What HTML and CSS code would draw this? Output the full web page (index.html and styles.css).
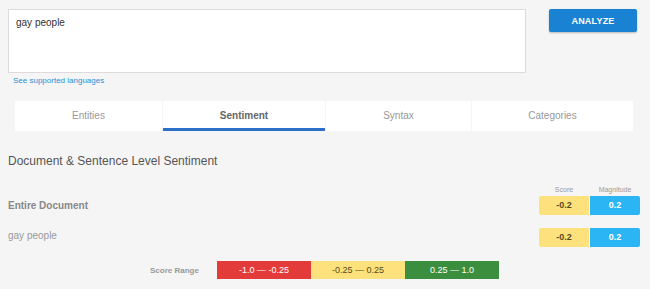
FILE: index.html
```html
<!DOCTYPE html>
<html lang="en">
<head>
  <meta charset="UTF-8">
  <title>Natural Language API</title>
  <link rel="stylesheet" href="styles.css">
</head>
<body>
  <div class="page">
    <div class="input-row">
      <div class="input-col">
        <div class="text-box">gay people</div>
        <a class="lang-link" href="#">See supported languages</a>
      </div>
      <button class="analyze">ANALYZE</button>
    </div>

    <div class="tabs">
      <div class="tab tab-entities">Entities</div>
      <div class="tab tab-sentiment active">Sentiment</div>
      <div class="tab tab-syntax">Syntax</div>
      <div class="tab tab-categories">Categories</div>
    </div>

    <h3 class="section-title">Document &amp; Sentence Level Sentiment</h3>

    <div class="score-head">
      <span>Score</span>
      <span>Magnitude</span>
    </div>

    <div class="result-row">
      <div class="doc-label">Entire Document</div>
      <div class="chips">
        <span class="chip chip-score">-0.2</span>
        <span class="chip chip-mag">0.2</span>
      </div>
    </div>

    <div class="result-row sentence">
      <div class="sent-label">gay people</div>
      <div class="chips">
        <span class="chip chip-score">-0.2</span>
        <span class="chip chip-mag">0.2</span>
      </div>
    </div>

    <div class="range-row">
      <span class="range-label">Score Range</span>
      <span class="range neg">-1.0 — -0.25</span>
      <span class="range neu">-0.25 — 0.25</span>
      <span class="range pos">0.25 — 1.0</span>
    </div>
  </div>
</body>
</html>
```

FILE: styles.css
```css
body {
  margin: 0;
  background: #f5f5f5;
  font-family: "Liberation Sans", Arial, sans-serif;
  color: #333;
}

.page {
  padding: 9px 10px 0 8px;
}

.input-row {
  display: flex;
  align-items: flex-start;
  gap: 23px;
}

.input-col {
  width: 518px;
}

.text-box {
  height: 64px;
  box-sizing: border-box;
  background: white;
  border: 1px solid #dcdcdc;
  padding: 7px 7px;
  font-size: 10px;
  color: #333;
}

.lang-link {
  display: block;
  margin-top: 3px;
  margin-left: 5px;
  font-size: 8px;
  color: #2a8fd6;
  text-decoration: none;
}

.analyze {
  width: 88px;
  height: 23px;
  border: none;
  border-radius: 2px;
  background: #1a82d2;
  color: white;
  font-family: "Liberation Sans", Arial, sans-serif;
  font-weight: bold;
  font-size: 9px;
  letter-spacing: 0.2px;
  box-shadow: 0 1px 2px rgba(0, 0, 0, 0.25);
}

.tabs {
  display: flex;
  gap: 1px;
  margin: 16px 0 0 7px;
  width: 618px;
}

.tab {
  height: 30px;
  line-height: 29px;
  background: white;
  text-align: center;
  font-size: 10px;
  color: #999;
  box-sizing: border-box;
}

.tab-entities { width: 147px; }
.tab-sentiment { width: 162px; }
.tab-syntax { width: 145px; }
.tab-categories { width: 161px; }

.tab.active {
  color: #666;
  font-weight: bold;
  border-bottom: 3px solid #2c6fc6;
}

.section-title {
  margin: 23px 0 0 0;
  font-size: 12px;
  font-weight: normal;
  color: #555;
}

.score-head {
  display: flex;
  justify-content: flex-end;
  margin-top: 18px;
}

.score-head span {
  width: 50px;
  text-align: center;
  font-size: 7px;
  color: #999;
}

.score-head span + span {
  margin-left: 1px;
}

.result-row {
  display: flex;
  justify-content: space-between;
  align-items: center;
  margin-top: 3px;
}

.result-row.sentence {
  margin-top: 13px;
}

.doc-label {
  font-size: 10px;
  font-weight: bold;
  color: #888;
}

.sent-label {
  font-size: 10px;
  color: #999;
  position: relative;
  top: -2px;
}

.chips {
  display: flex;
  gap: 1px;
}

.chip {
  width: 50px;
  height: 19px;
  line-height: 19px;
  text-align: center;
  font-size: 9px;
  font-weight: bold;
}

.chip-score {
  background: #fde17c;
  color: #5a4a1a;
  border-radius: 2px 0 0 2px;
}

.chip-mag {
  background: #2bb5f5;
  color: white;
  border-radius: 0 2px 2px 0;
}

.range-row {
  display: flex;
  align-items: center;
  margin: 14px 0 0 142px;
}

.range-label {
  width: 67px;
  font-size: 8px;
  font-weight: bold;
  color: #999;
}

.range {
  width: 94px;
  height: 18px;
  line-height: 18px;
  text-align: center;
  font-size: 9px;
}

.neg {
  background: #e33b3a;
  color: white;
}

.neu {
  background: #fde17c;
  color: #5a4a1a;
}

.pos {
  background: #3b8e3d;
  color: white;
}
```
